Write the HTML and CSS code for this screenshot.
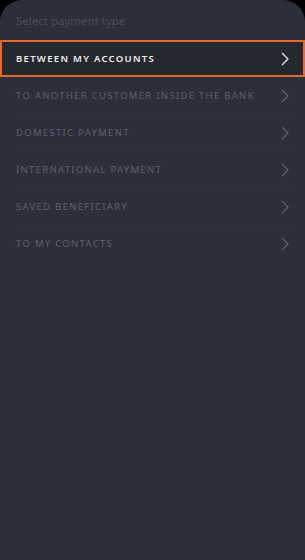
FILE: index.html
```html
<!DOCTYPE html>
<html>
<head>
<meta charset="utf-8">
<link rel="stylesheet" href="styles.css">
</head>
<body>
<div class="sheet">
  <div class="title">Select payment type</div>
  <ul class="list">
    <li class="item active"><span>BETWEEN MY ACCOUNTS</span><svg class="chev" viewBox="0 0 8 14"><path d="M1 1 L7 7 L1 13" /></svg></li>
    <li class="item"><span>TO ANOTHER CUSTOMER INSIDE THE BANK</span><svg class="chev" viewBox="0 0 8 14"><path d="M1 1 L7 7 L1 13" /></svg></li>
    <li class="item"><span>DOMESTIC PAYMENT</span><svg class="chev" viewBox="0 0 8 14"><path d="M1 1 L7 7 L1 13" /></svg></li>
    <li class="item"><span>INTERNATIONAL PAYMENT</span><svg class="chev" viewBox="0 0 8 14"><path d="M1 1 L7 7 L1 13" /></svg></li>
    <li class="item"><span>SAVED BENEFICIARY</span><svg class="chev" viewBox="0 0 8 14"><path d="M1 1 L7 7 L1 13" /></svg></li>
    <li class="item"><span>TO MY CONTACTS</span><svg class="chev" viewBox="0 0 8 14"><path d="M1 1 L7 7 L1 13" /></svg></li>
  </ul>
</div>
</body>
</html>
```
FILE: styles.css
```css
html, body {
  margin: 0;
  padding: 0;
  background: #000;
  height: 100%;
}
.sheet {
  width: 305px;
  height: 560px;
  background: #2c2e3b;
  border-radius: 22px 22px 0 0;
  font-family: "Noto Sans", "DejaVu Sans", sans-serif;
  box-sizing: border-box;
  padding-top: 13px;
}
.title {
  padding-left: 16px;
  font-size: 11.5px;
  color: #4b4d5a;
  height: 27px;
  line-height: 16px;
}
.list {
  list-style: none;
  margin: 0;
  padding: 0;
}
.item {
  position: relative;
  height: 37px;
  display: flex;
  align-items: center;
  justify-content: space-between;
  padding: 0 16px;
  font-size: 9.5px;
  letter-spacing: 1.3px;
  color: #5e606e;
  box-sizing: border-box;
}
.item + .item::before {
  content: "";
  position: absolute;
  left: 16px;
  right: 16px;
  top: 0;
  height: 1px;
  background: #30323f;
}
.item.active {
  background: #26282f;
  border: 2px solid #e7692f;
  padding: 0 14px;
  color: #eeeeee;
  font-weight: 600;
}
.item.active + .item::before {
  display: none;
}
.chev {
  width: 8px;
  height: 14px;
  fill: none;
  stroke: #5e606e;
  stroke-width: 1.3;
}
.item.active .chev {
  stroke: #e8e8e8;
}
```
